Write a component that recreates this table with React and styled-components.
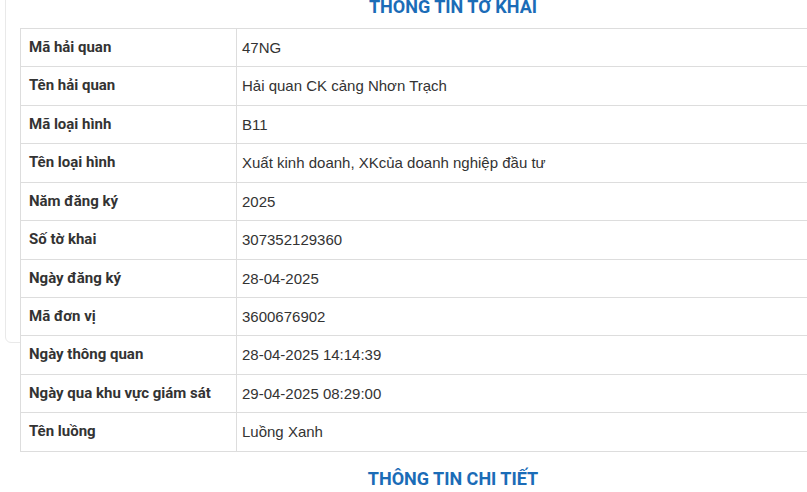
import React from 'react'
import styled, { createGlobalStyle } from 'styled-components'

const GlobalStyle = createGlobalStyle`
  html, body {
    margin: 0;
    padding: 0;
    background: #fff;
    overflow: hidden;
  }
  body {
    width: 807px;
    height: 492px;
  }
`

const Page = styled.div`
  position: relative;
  width: 807px;
  height: 492px;
  overflow: hidden;
`

// faint card edge peeking out from behind the table
const BackCard = styled.div`
  position: absolute;
  left: 5px;
  top: -10px;
  width: 900px;
  height: 351px;
  border: 1px solid #e9e9e9;
  border-radius: 6px;
  z-index: 0;
`

const Content = styled.div`
  position: relative;
  z-index: 1;
  width: 866px;
  margin-left: 20px;
  display: flex;
  flex-direction: column;
`

const Heading = styled.h3`
  margin: ${({ $top }) => $top}px 0 0;
  font-family: Roboto, "Liberation Sans", sans-serif;
  font-size: 18px;
  line-height: 20px;
  font-weight: 700;
  color: #1b6cb7;
  text-align: center;
  text-transform: uppercase;
`

const Table = styled.table`
  margin-top: 11px;
  width: 100%;
  border-collapse: collapse;
  background: #fff;
  border: 1px solid #ddd;
  font-size: 15px;
  line-height: 1.42857;
  color: #333;
`

const Row = styled.tr`
  border-top: 1px solid #ddd;
`

const Label = styled.td`
  width: 199px;
  padding: 8px 8px;
  border-right: 1px solid #ddd;
  font-family: Roboto, "Liberation Sans", sans-serif;
  font-weight: 700;
  color: #333;
  white-space: nowrap;
`

const Value = styled.td`
  padding: 8px 5px;
  font-family: "Liberation Sans", Arial, sans-serif;
  color: #333;
`

const rows = [
  ['Mã hải quan', '47NG'],
  ['Tên hải quan', 'Hải quan CK cảng Nhơn Trạch'],
  ['Mã loại hình', 'B11'],
  ['Tên loại hình', 'Xuất kinh doanh, XKcủa doanh nghiệp đầu tư'],
  ['Năm đăng ký', '2025'],
  ['Số tờ khai', '307352129360'],
  ['Ngày đăng ký', '28-04-2025'],
  ['Mã đơn vị', '3600676902'],
  ['Ngày thông quan', '28-04-2025 14:14:39'],
  ['Ngày qua khu vực giám sát', '29-04-2025 08:29:00'],
  ['Tên luồng', 'Luồng Xanh'],
]

const App = () => {
  return (
    <Page>
      <GlobalStyle />
      <BackCard />
      <Content>
        <Heading $top={-3}>Thông tin tờ khai</Heading>
        <Table>
          <tbody>
            {rows.map(([label, value]) => (
              <Row key={label}>
                <Label>{label}</Label>
                <Value>{value}</Value>
              </Row>
            ))}
          </tbody>
        </Table>
        <Heading $top={17}>Thông tin chi tiết</Heading>
      </Content>
    </Page>
  )
}

export default App
